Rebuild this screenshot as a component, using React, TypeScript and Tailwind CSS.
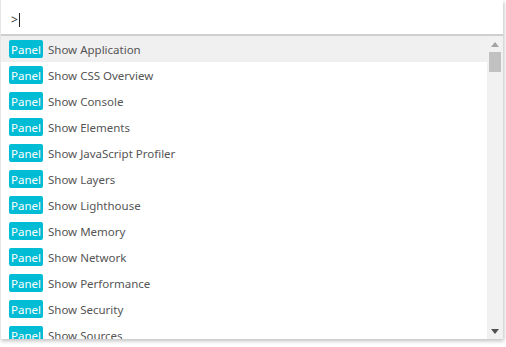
import React from "react";

const commands = [
  "Show Application",
  "Show CSS Overview",
  "Show Console",
  "Show Elements",
  "Show JavaScript Profiler",
  "Show Layers",
  "Show Lighthouse",
  "Show Memory",
  "Show Network",
  "Show Performance",
  "Show Security",
  "Show Sources",
];

const Row: React.FC<{ label: string; active?: boolean }> = ({ label, active }) => (
  <div className={`flex h-[26px] shrink-0 items-center pl-[8px] ${active ? "bg-[#f0f0f0]" : "bg-white"}`}>
    <span className="flex h-[18px] items-center rounded-[2px] bg-[#00bcd4] px-[2px] pt-px text-[11.5px] text-white">
      Panel
    </span>
    <span className="ml-[5px] pt-px text-[11.5px] text-[#555]">{label}</span>
  </div>
);

const Scrollbar = () => (
  <div className="flex w-[16px] shrink-0 flex-col items-center bg-[#f1f1f1]">
    <div className="flex h-[16px] w-full items-center justify-center">
      <svg width="8" height="5" viewBox="0 0 8 5">
        <path d="M4 0 L8 5 L0 5 Z" fill="#a3a3a3" />
      </svg>
    </div>
    <div className="h-[20px] w-[12px] bg-[#c1c1c1]" />
    <div className="flex-1" />
    <div className="flex h-[16px] w-full items-center justify-center">
      <svg width="8" height="5" viewBox="0 0 8 5">
        <path d="M0 0 L8 0 L4 5 Z" fill="#505050" />
      </svg>
    </div>
  </div>
);

export default function App() {
  return (
    <div className="h-[347px] w-[506px] bg-white" style={{ fontFamily: '"Noto Sans", "Open Sans", sans-serif' }}>
      <div className="flex h-[339px] w-[503px] flex-col border-l border-[#e6e6e6] bg-white shadow-[1px_2px_4px_rgba(0,0,0,0.25)]">
        <div className="flex h-[34px] shrink-0 items-center pl-[10px] pt-[6px] text-[12px] text-[#333]">
          <span>&gt;</span>
          <span className="ml-[1px] h-[14px] w-px bg-[#222]" />
        </div>
        <div className="h-[2px] shrink-0 bg-[#cfcfcf]" />
        <div className="flex min-h-0 flex-1">
          <div className="flex min-w-0 flex-1 flex-col overflow-hidden">
            {commands.map((c, i) => (
              <Row key={c} label={c} active={i === 0} />
            ))}
          </div>
          <Scrollbar />
        </div>
      </div>
    </div>
  );
}
